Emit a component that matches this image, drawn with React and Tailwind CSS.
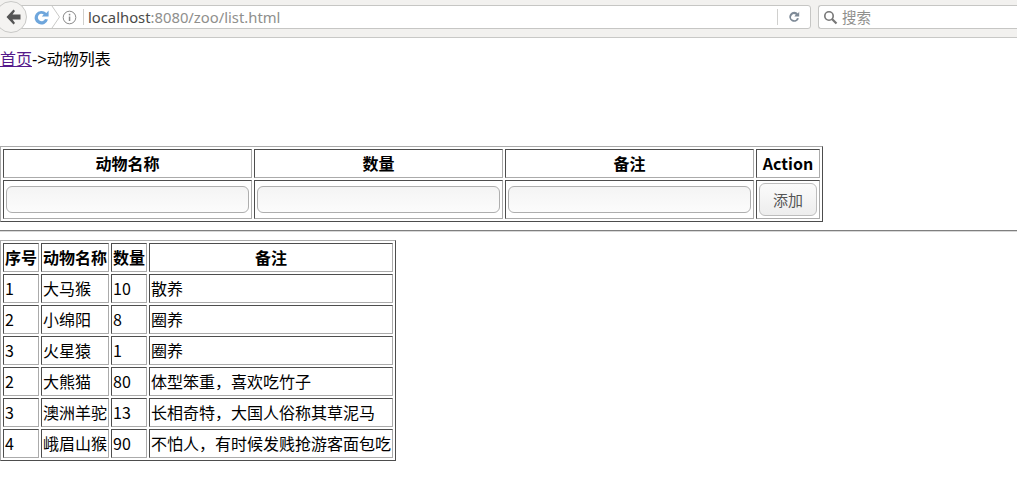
const sans = "[font-family:'Noto_Sans_CJK_SC','Liberation_Sans',sans-serif]";

const Th = ({ children, className = "" }) => (
  <th className={`border border-solid border-t-[#4d4d4d] border-l-[#4d4d4d] border-r-[#ababab] border-b-[#ababab] p-px text-center align-middle font-bold text-black h-[29px] ${className}`}>
    {children}
  </th>
);
const Td = ({ children, className = "" }) => (
  <td className={`border border-solid border-t-[#4d4d4d] border-l-[#4d4d4d] border-r-[#ababab] border-b-[#ababab] p-px text-left align-middle font-normal text-black h-[29px] whitespace-nowrap ${className}`}>
    {children}
  </td>
);
const tableCls = "border-separate border-spacing-[2px] border border-solid border-t-[#ababab] border-l-[#ababab] border-r-[#4d4d4d] border-b-[#4d4d4d] text-[16px] leading-[23px]";

const Input = () => (
  <input className="block m-px w-[243px] h-[27px] border border-solid border-[#aeaeae] rounded-[6px] bg-gradient-to-b from-[#f4f4f4] to-[#fcfcfc]" />
);

const rows = [
  ["1", "大马猴", "10", "散养"],
  ["2", "小绵阳", "8", "圈养"],
  ["3", "火星猿", "1", "圈养"],
  ["2", "大熊猫", "80", "体型笨重，喜欢吃竹子"],
  ["3", "澳洲羊驼", "13", "长相奇特，大国人俗称其草泥马"],
  ["4", "峨眉山猴", "90", "不怕人，有时候发贱抢游客面包吃"],
];

function Chrome() {
  return (
    <div className="relative flex items-start h-[38px] bg-[#f2f1ef] border-b border-solid border-[#c8c8c6] pt-[5px] pl-[20px] gap-[7px] overflow-hidden [font-family:'Noto_Sans',sans-serif]">
      <div className="absolute left-[-5px] top-[1px] w-[32px] h-[32px] rounded-full bg-[#f4f3f1] border border-solid border-[#c9c9c7] flex items-center justify-center z-10">
        <svg width="15" height="16" viewBox="0 0 15 16" className="ml-[5px]">
          <path d="M7.5 0.5 L0.5 8 L7.5 15.5 L9 14 L6.5 10.5 L14.5 10.5 L14.5 5.5 L6.5 5.5 L9 2 Z" fill="#555" />
        </svg>
      </div>
      <div className="flex items-center h-[24px] w-[791px] bg-white border border-solid border-[#c6c6c4] rounded-r-[3px] pl-[13px]">
        <svg width="15" height="15" viewBox="0 0 15 15" className="shrink-0">
          <path d="M12.4 3.1 A6.8 6.8 0 1 0 14 9.5 L11 9 A3.7 3.7 0 1 1 9.7 4.4 L7.8 6.6 L14.6 6.6 L14.6 0.6 Z" fill="#6ea6dc" />
        </svg>
        <svg width="10" height="22" viewBox="0 0 10 22" className="ml-[2px] shrink-0">
          <path d="M1 0 L8.5 11 L1 22" fill="none" stroke="#c9c9c7" />
        </svg>
        <svg width="15" height="15" viewBox="0 0 15 15" className="ml-[1px] shrink-0">
          <circle cx="7.5" cy="7.5" r="6.3" fill="none" stroke="#8a8a8a" />
          <rect x="6.8" y="6.5" width="1.5" height="4.5" fill="#8a8a8a" />
          <rect x="6.8" y="3.8" width="1.5" height="1.6" fill="#8a8a8a" />
        </svg>
        <div className="w-px h-[16px] bg-[#d0d0ce] ml-[6px] shrink-0" />
        <span className="ml-[4px] text-[14.8px] leading-none text-[#4a4a48] whitespace-nowrap">
          localhost<span className="text-[#8f8f8d]">:8080/zoo/list.html</span>
        </span>
        <div className="w-px h-[16px] bg-[#d0d0ce] ml-auto shrink-0" />
        <svg width="14" height="14" viewBox="0 0 14 14" className="ml-[9px] mr-[9px] shrink-0">
          <path d="M11 3.4 A5 5 0 1 0 12 8.5 L10 8 A3 3 0 1 1 8.8 4.6 L7.4 6.4 L12.2 6.4 L12.2 1.5 Z" fill="#7e8a97" />
        </svg>
      </div>
      <div className="flex items-center h-[24px] flex-1 bg-white border border-solid border-r-0 border-[#c6c6c4] rounded-l-[3px] pl-[4px]">
        <svg width="15" height="15" viewBox="0 0 15 15" className="shrink-0">
          <circle cx="6" cy="6" r="4.2" fill="none" stroke="#777" strokeWidth="1.6" />
          <path d="M9 9 L13.5 13.5" stroke="#777" strokeWidth="2.2" />
        </svg>
        <span className="ml-[4px] text-[14.5px] leading-none text-[#8f8f8d] [font-family:'Noto_Sans_CJK_SC',sans-serif]">搜索</span>
      </div>
    </div>
  );
}

export default function App() {
  return (
    <div className={`${sans} bg-white text-black text-[16px] min-h-[493px]`}>
      <Chrome />
      <div className="h-[108px] pt-[9px] leading-[23px]">
        <a href="#" className="text-[#551a8b] underline">首页</a>
        <span className="[font-family:'Liberation_Sans','Noto_Sans_CJK_SC',sans-serif]">-&gt;动物列表</span>
      </div>
      <table className={tableCls}>
        <thead>
          <tr>
            <Th className="w-[249px]">动物名称</Th>
            <Th className="w-[249px]">数量</Th>
            <Th className="w-[249px]">备注</Th>
            <Th>Action</Th>
          </tr>
        </thead>
        <tbody>
          <tr>
            <Td className="h-[39px]"><Input /></Td>
            <Td className="h-[39px]"><Input /></Td>
            <Td className="h-[39px]"><Input /></Td>
            <Td className="h-[39px]">
              <button className="block m-px w-[58px] h-[33px] border border-solid border-[#bdbdbd] rounded-[6px] bg-gradient-to-b from-[#fbfbfb] to-[#ededed] text-[15px] leading-none text-[#555] text-center">添加</button>
            </Td>
          </tr>
        </tbody>
      </table>
      <hr className="my-[8px] border-0 border-t border-b border-solid border-t-[#7f7f7f] border-b-[#d8d8d8] h-[2px]" />
      <table className={tableCls}>
        <thead>
          <tr>
            <Th>序号</Th>
            <Th>动物名称</Th>
            <Th>数量</Th>
            <Th>备注</Th>
          </tr>
        </thead>
        <tbody>
          {rows.map((r, i) => (
            <tr key={i}>
              {r.map((c, j) => (
                <Td key={j}>{c}</Td>
              ))}
            </tr>
          ))}
        </tbody>
      </table>
    </div>
  );
}
